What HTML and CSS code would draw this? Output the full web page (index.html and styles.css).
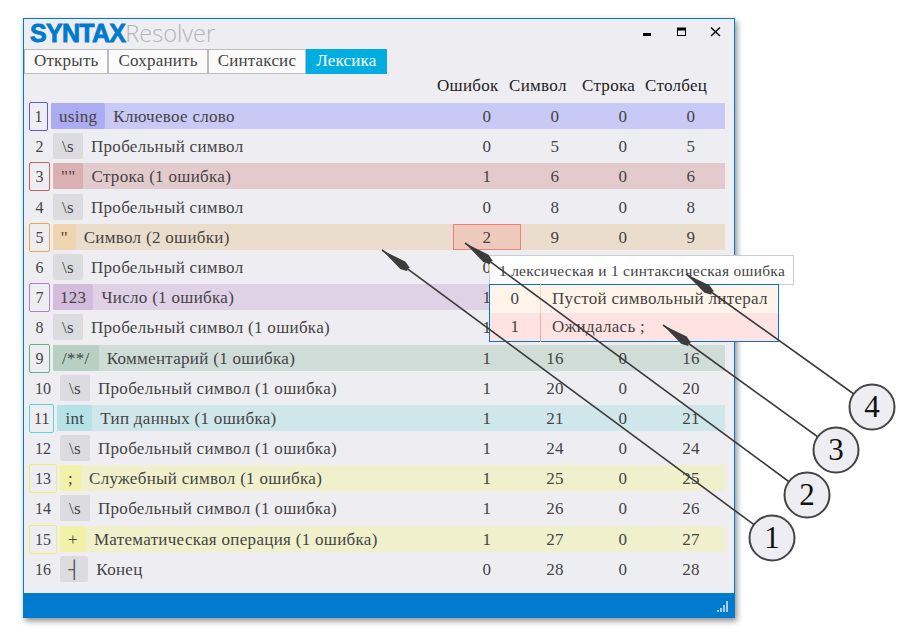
FILE: index.html
```html
<!DOCTYPE html>
<html lang="ru">

<head>
    <meta charset="UTF-8">
    <meta name="viewport" content="width=device-width, initial-scale=1.0">
    <title>Syntax Resolver</title>
    <link rel="stylesheet" href="styles.css">
</head>

<body>
    <div class="window">
        <div class="titlebar">
            <div class="logo"><span class="logo-bold">SYNTAX</span><span class="logo-thin">Resolver</span></div>
            <div class="controls">
                <svg width="14" height="14" viewBox="0 0 14 14"><rect x="1" y="8" width="8" height="3" fill="#000"/></svg>
                <svg width="14" height="14" viewBox="0 0 14 14"><rect x="2.500" y="3" width="8" height="7.500" fill="none" stroke="#000"/><rect x="2" y="3" width="9" height="2.500" fill="#000"/></svg>
                <svg width="14" height="14" viewBox="0 0 14 14"><path d="M3 2.500 L12 11 M12 2.500 L3 11" stroke="#000" stroke-width="1.400"/></svg>
            </div>
        </div>

        <div class="tabs">
            <div class="tab">Открыть</div>
            <div class="tab">Сохранить</div>
            <div class="tab">Синтаксис</div>
            <div class="tab active">Лексика</div>
        </div>

        <div class="head">
            <span>Ошибок</span>
            <span>Символ</span>
            <span>Строка</span>
            <span>Столбец</span>
        </div>

        <div class="rows">
            <div class="row">
                <div class="num blue">1</div>
                <div class="band blue">
                    <span class="token">using</span><span class="label">Ключевое слово</span>
                    <span class="cell">0</span><span class="cell">0</span><span class="cell">0</span><span class="cell">0</span>
                </div>
            </div>
            <div class="row">
                <div class="num">2</div>
                <div class="band">
                    <span class="token ws">\s</span><span class="label">Пробельный символ</span>
                    <span class="cell">0</span><span class="cell">5</span><span class="cell">0</span><span class="cell">5</span>
                </div>
            </div>
            <div class="row">
                <div class="num red">3</div>
                <div class="band red">
                    <span class="token">""</span><span class="label">Строка (1 ошибка)</span>
                    <span class="cell">1</span><span class="cell">6</span><span class="cell">0</span><span class="cell">6</span>
                </div>
            </div>
            <div class="row">
                <div class="num">4</div>
                <div class="band">
                    <span class="token ws">\s</span><span class="label">Пробельный символ</span>
                    <span class="cell">0</span><span class="cell">8</span><span class="cell">0</span><span class="cell">8</span>
                </div>
            </div>
            <div class="row">
                <div class="num orange">5</div>
                <div class="band orange">
                    <span class="token">''</span><span class="label">Символ (2 ошибки)</span>
                    <span class="cell error">2</span><span class="cell">9</span><span class="cell">0</span><span class="cell">9</span>
                </div>
            </div>
            <div class="row">
                <div class="num">6</div>
                <div class="band">
                    <span class="token ws">\s</span><span class="label">Пробельный символ</span>
                    <span class="cell">0</span><span class="cell"></span><span class="cell"></span><span class="cell"></span>
                </div>
            </div>
            <div class="row">
                <div class="num purple">7</div>
                <div class="band purple">
                    <span class="token">123</span><span class="label">Число (1 ошибка)</span>
                    <span class="cell">1</span><span class="cell"></span><span class="cell"></span><span class="cell"></span>
                </div>
            </div>
            <div class="row">
                <div class="num">8</div>
                <div class="band">
                    <span class="token ws">\s</span><span class="label">Пробельный символ (1 ошибка)</span>
                    <span class="cell">1</span><span class="cell"></span><span class="cell"></span><span class="cell"></span>
                </div>
            </div>
            <div class="row">
                <div class="num green">9</div>
                <div class="band green">
                    <span class="token">/**/</span><span class="label">Комментарий (1 ошибка)</span>
                    <span class="cell">1</span><span class="cell">16</span><span class="cell">0</span><span class="cell">16</span>
                </div>
            </div>
            <div class="row">
                <div class="num">10</div>
                <div class="band">
                    <span class="token ws">\s</span><span class="label">Пробельный символ (1 ошибка)</span>
                    <span class="cell">1</span><span class="cell">20</span><span class="cell">0</span><span class="cell">20</span>
                </div>
            </div>
            <div class="row">
                <div class="num teal">11</div>
                <div class="band teal">
                    <span class="token">int</span><span class="label">Тип данных (1 ошибка)</span>
                    <span class="cell">1</span><span class="cell">21</span><span class="cell">0</span><span class="cell">21</span>
                </div>
            </div>
            <div class="row">
                <div class="num">12</div>
                <div class="band">
                    <span class="token ws">\s</span><span class="label">Пробельный символ (1 ошибка)</span>
                    <span class="cell">1</span><span class="cell">24</span><span class="cell">0</span><span class="cell">24</span>
                </div>
            </div>
            <div class="row">
                <div class="num yellow">13</div>
                <div class="band yellow">
                    <span class="token">;</span><span class="label">Служебный символ (1 ошибка)</span>
                    <span class="cell">1</span><span class="cell">25</span><span class="cell">0</span><span class="cell">25</span>
                </div>
            </div>
            <div class="row">
                <div class="num">14</div>
                <div class="band">
                    <span class="token ws">\s</span><span class="label">Пробельный символ (1 ошибка)</span>
                    <span class="cell">1</span><span class="cell">26</span><span class="cell">0</span><span class="cell">26</span>
                </div>
            </div>
            <div class="row">
                <div class="num yellow">15</div>
                <div class="band yellow">
                    <span class="token">+</span><span class="label">Математическая операция (1 ошибка)</span>
                    <span class="cell">1</span><span class="cell">27</span><span class="cell">0</span><span class="cell">27</span>
                </div>
            </div>
            <div class="row">
                <div class="num">16</div>
                <div class="band">
                    <span class="token">┤</span><span class="label">Конец</span>
                    <span class="cell">0</span><span class="cell">28</span><span class="cell">0</span><span class="cell">28</span>
                </div>
            </div>
        </div>

        <div class="statusbar">
            <svg width="12" height="11" viewBox="0 0 12 11" fill="#a8d0ee">
                <rect x="0" y="9" width="2" height="2"/>
                <rect x="3" y="7" width="2" height="4"/>
                <rect x="6" y="4" width="2" height="7"/>
                <rect x="9" y="0" width="2" height="11"/>
            </svg>
        </div>
    </div>

    <!-- popup over the error cell -->
    <div class="popup">
        <div class="popup-title">1 лексическая и 1 синтаксическая ошибка</div>
        <table class="popup-table">
            <tr class="lex">
                <td class="pos">0</td>
                <td>Пустой символьный литерал</td>
            </tr>
            <tr class="syn">
                <td class="pos">1</td>
                <td>Ожидалась ;</td>
            </tr>
        </table>
    </div>

    <!-- callouts -->
    <svg class="callouts" width="910" height="632" viewBox="0 0 910 632">
        <defs>
            <path id="head" d="M0 0 L-26 -4.500 L-33 -2 L-31 0 L-33 2 L-26 4.500 Z" fill="#3c3c3c"/>
        </defs>
        <g stroke="#3c3c3c" stroke-width="1.600" fill="none">
            <line x1="382" y1="250" x2="772" y2="538"/>
            <line x1="465" y1="243" x2="807" y2="495"/>
            <line x1="663" y1="325" x2="836" y2="450"/>
            <line x1="686" y1="274" x2="872" y2="407"/>
        </g>
        <use href="#head" transform="translate(382 250) rotate(216.400)"/>
        <use href="#head" transform="translate(465 243) rotate(216.400)"/>
        <use href="#head" transform="translate(663 325) rotate(215.900)"/>
        <use href="#head" transform="translate(686 274) rotate(215.600)"/>
        <g fill="#eeeef2" stroke="#444" stroke-width="2">
            <circle cx="772" cy="538" r="22.500"/>
            <circle cx="807" cy="495" r="22.500"/>
            <circle cx="836" cy="450" r="22.500"/>
            <circle cx="872" cy="407" r="22.500"/>
        </g>
        <g class="callout-nums" text-anchor="middle">
            <text x="772" y="548">1</text>
            <text x="807" y="505">2</text>
            <text x="836" y="460">3</text>
            <text x="872" y="417">4</text>
        </g>
    </svg>
</body>

</html>
```

FILE: styles.css
```css
body {
    margin: 0;
    width: 910px;
    height: 632px;
    background-color: #ffffff;
    font-family: "Liberation Serif", serif;
    font-size: 17px;
    letter-spacing: 0.300px;
    color: #444444;
    position: relative;
    overflow: hidden;
}

.window {
    box-sizing: border-box;
    width: 712px;
    height: 600px;
    margin: 18px 0 0 23px;
    display: flex;
    flex-direction: column;
    background-color: #eeeef2;
    border: 1px solid #007acc;
    border-bottom: none;
    box-shadow: 2px 3px 6px rgba(0, 0, 0, 0.45);
}

.titlebar {
    display: flex;
    justify-content: space-between;
    height: 30px;
    padding-left: 6px;
}

.logo {
    font-family: "Liberation Sans", sans-serif;
    font-size: 25px;
    line-height: 29px;
    letter-spacing: 0;
    white-space: nowrap;
}

.logo-bold {
    font-weight: bold;
    color: #007acc;
    letter-spacing: -0.700px;
    -webkit-text-stroke: 0.800px #007acc;
}

.logo-thin {
    font-family: "Open Sans", sans-serif;
    font-weight: 300;
    font-size: 23.500px;
    color: #b4b4b8;
}

.controls {
    display: flex;
    gap: 19px;
    padding: 6px 12px 0 0;
}

.tabs {
    display: flex;
    height: 25px;
    letter-spacing: 0.200px;
}

.tab {
    box-sizing: border-box;
    padding: 0 9px;
    height: 25px;
    line-height: 22px;
    color: #444444;
    background-color: #fbfbfb;
    border: 1px solid #bbbbbb;
}

.tab.active {
    color: #ffffff;
    background-color: #00ade0;
    border-color: #00ade0;
}

.head {
    display: grid;
    grid-template-columns: 72px 73px 63px 62px;
    justify-items: start;
    margin-left: 413px;
    padding-top: 2px;
    height: 29px;
    box-sizing: border-box;
    color: #222222;
    line-height: 20px;
}

.rows {
    display: grid;
    grid-auto-rows: 26px;
    row-gap: 4.200px;
    padding: 0 9px 0 5px;
}

.row {
    display: flex;
}

.num {
    box-sizing: border-box;
    height: 29px;
    min-width: 21px;
    margin: -1px 3px 0 0;
    padding: 0 5px;
    font-size: 16px;
    letter-spacing: 0;
    line-height: 28px;
    text-align: center;
    border: 1px solid transparent;
    border-radius: 2px;
    flex: none;
}

.band {
    flex: 1;
    display: flex;
    align-items: stretch;
    line-height: 28px;
}

.token {
    padding: 0 8px;
    background-color: #dcdce0;
    border-radius: 2px;
}

.token.ws {
    padding: 0 9px;
}

.label {
    flex: 1;
    margin-left: 8px;
    white-space: nowrap;
}

.cell {
    box-sizing: border-box;
    width: 68px;
    text-align: center;
}

.cell.error {
    background-color: #eecabc;
    border: 1px solid #f08080;
    line-height: 26px;
}

.statusbar {
    margin-top: auto;
    height: 25px;
    display: flex;
    justify-content: flex-end;
    align-items: flex-end;
    padding: 0 5px 6px 0;
    background-color: #007acc;
    box-sizing: border-box;
}

/* colours per token type */
.num.blue { border-color: #5a5af0; min-width: 19px; padding: 0 4.500px; }
.band.blue { background-color: #c9c9f5; }
.band.blue .token { background-color: #acacf2; }

.num.red { border-color: #c86464; }
.band.red { background-color: #e3cbcd; }
.band.red .token { background-color: #dbb0b2; }

.num.orange { border-color: #eba94a; }
.band.orange { background-color: #ebddcc; }
.band.orange .token { background-color: #eed5b0; }

.num.purple { border-color: #b27ec8; }
.band.purple { background-color: #e0d2e6; }
.band.purple .token { background-color: #d3bcdc; padding: 0 7px; }

.num.green { border-color: #6eaa8c; }
.band.green { background-color: #d0dcd8; }
.band.green .token { background-color: #b8d0c4; padding: 0 9px; }

.num.teal { border-color: #5fd2e0; padding: 0 4px; }
.band.teal { background-color: #cfe6ea; }
.band.teal .token { background-color: #b4e2e6; }

.num.yellow { border-color: #f0f064; }
.band.yellow { background-color: #f0f1cc; }
.band.yellow .token { background-color: #f1f2a8; }

.popup {
    position: absolute;
    left: 489px;
    top: 255px;
    width: 305px;
}

.popup-title {
    box-sizing: border-box;
    height: 30px;
    padding-left: 9px;
    font-size: 15.400px;
    line-height: 30px;
    background-color: #ffffff;
    border: 1px solid #cccccc;
    white-space: nowrap;
}

.popup-table {
    box-sizing: border-box;
    width: 290px;
    height: 58px;
    margin-top: -1px;
    position: relative;
    border: 1px solid #0f72c0;
    border-collapse: collapse;
}

.popup-table td {
    padding: 0 0 0 11px;
    height: 28px;
}

.popup-table .pos {
    width: 50px;
    padding: 0;
    text-align: center;
}

.lex {
    background-color: #fff4e9;
}

.lex .pos {
    border-right: 1px solid #f7d8b0;
}

.syn {
    background-color: #ffe3e3;
}

.syn .pos {
    border-right: 1px solid #f7a8a8;
}

.callouts {
    position: absolute;
    left: 0;
    top: 0;
}

.callout-nums {
    font-family: "Liberation Serif", serif;
    font-size: 31px;
    letter-spacing: 0;
    fill: #111111;
}
```
